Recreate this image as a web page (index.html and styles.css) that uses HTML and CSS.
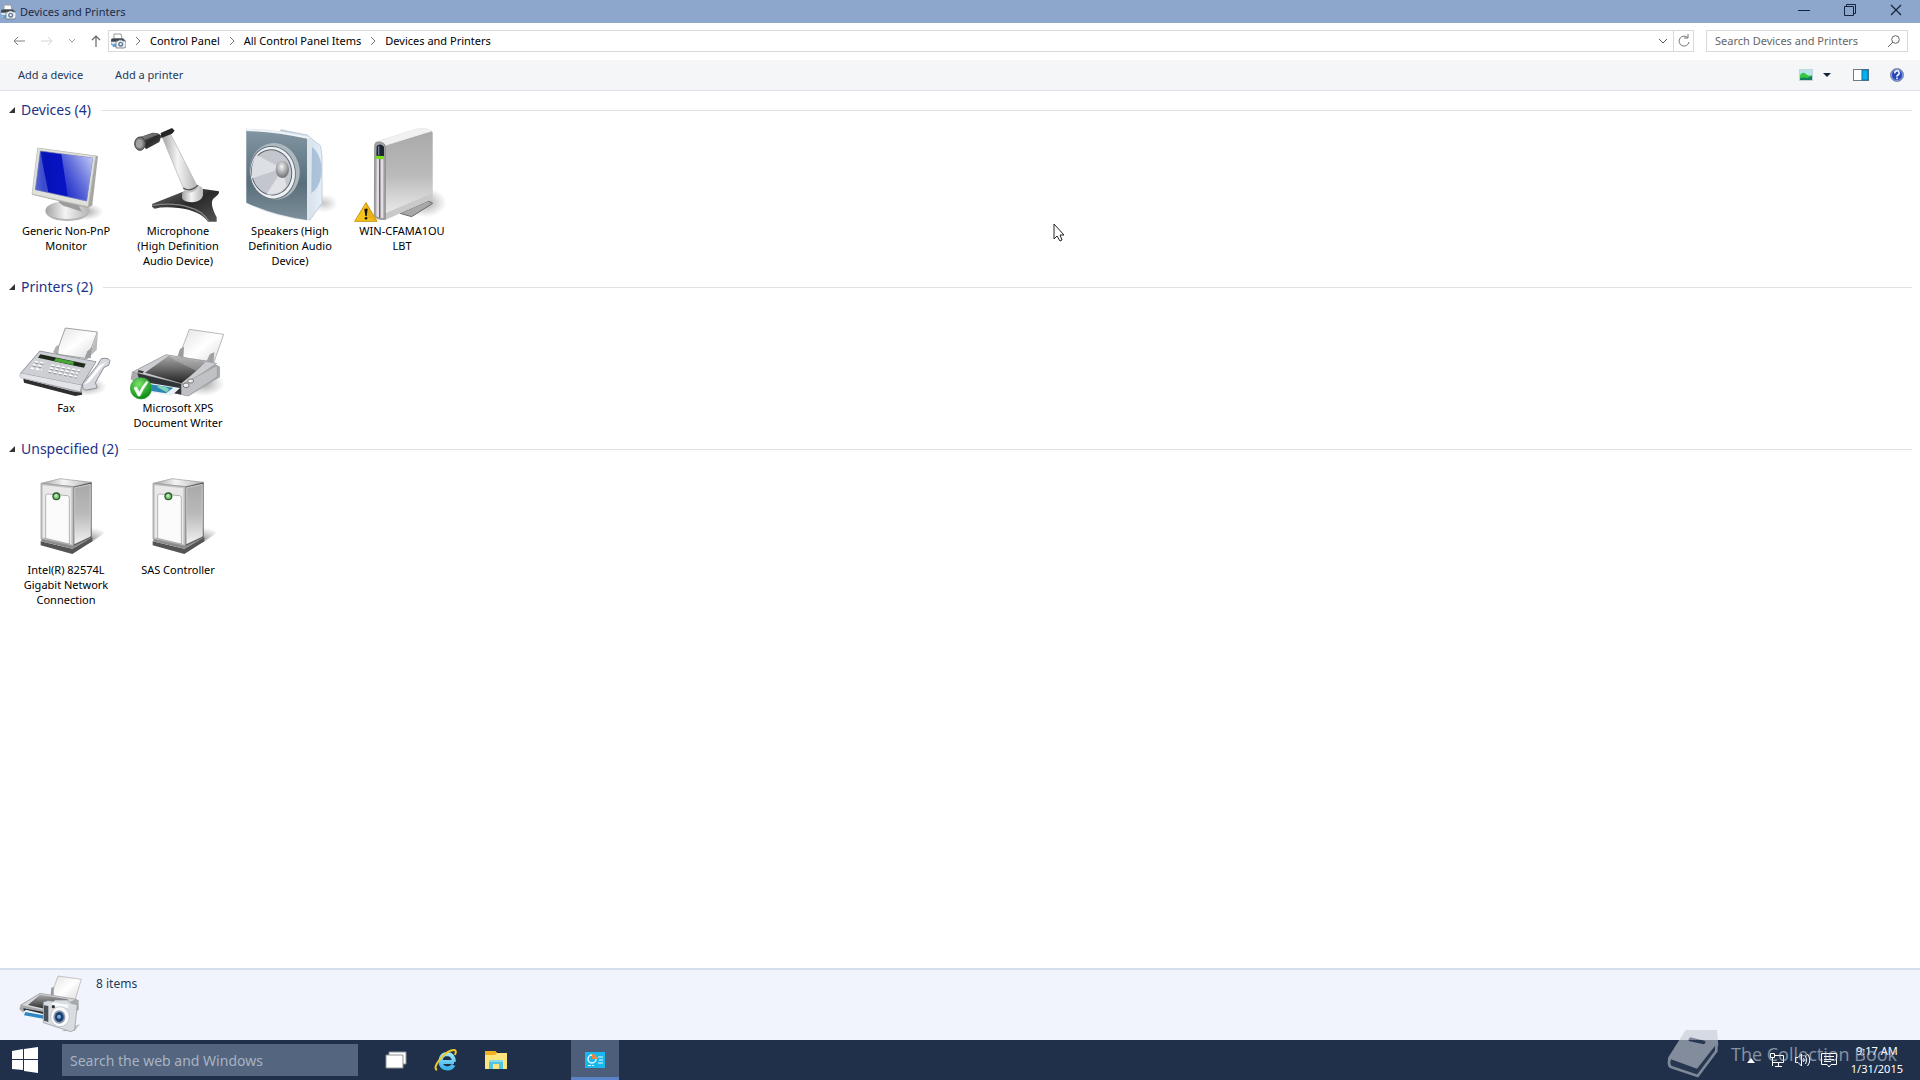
FILE: index.html
```
<!DOCTYPE html>
<html lang="en">
<head>
    <meta charset="utf-8">
    <title>Devices and Printers</title>
    <link rel="stylesheet" href="styles.css">
</head>

<body>
    <!-- shared gradients and symbols -->
    <svg class="defs" aria-hidden="true">
        <defs>
            <linearGradient id="screen" x1="0" y1="0" x2="1" y2="0"><stop offset="0" stop-color="#2a3fc0"/><stop offset=".15" stop-color="#0512b8"/><stop offset=".5" stop-color="#0714c4"/><stop offset="1" stop-color="#2c3cc4"/></linearGradient>
            <linearGradient id="gloss" x1="0" y1="1" x2="1" y2="0"><stop offset="0" stop-color="#4a5ad8" stop-opacity=".2"/><stop offset="1" stop-color="#d5dcfc" stop-opacity=".95"/></linearGradient>
            <linearGradient id="metal" x1="0" y1="0" x2="1" y2="1"><stop offset="0" stop-color="#f2f2f2"/><stop offset=".5" stop-color="#cfcfcf"/><stop offset="1" stop-color="#9a9a9a"/></linearGradient>
            <linearGradient id="metalh" x1="0" y1="0" x2="1" y2="0"><stop offset="0" stop-color="#a2a2a2"/><stop offset=".45" stop-color="#f4f4f4"/><stop offset="1" stop-color="#b4b4b4"/></linearGradient>
            <linearGradient id="paper" x1="0" y1="0" x2="1" y2="1"><stop offset="0" stop-color="#e2e2e2"/><stop offset=".5" stop-color="#fff"/><stop offset="1" stop-color="#d8d8d8"/></linearGradient>
            <linearGradient id="dark" x1="0" y1="0" x2="1" y2="1"><stop offset="0" stop-color="#6c6c6c"/><stop offset=".5" stop-color="#2a2a2a"/><stop offset="1" stop-color="#555"/></linearGradient>
            <linearGradient id="lid" x1="0" y1="0" x2="0" y2="1"><stop offset="0" stop-color="#a8a8a8"/><stop offset="1" stop-color="#222"/></linearGradient>
            <linearGradient id="slate" x1="0" y1="0" x2="0" y2="1"><stop offset="0" stop-color="#8196a2"/><stop offset=".6" stop-color="#5a6f7c"/><stop offset="1" stop-color="#7d909b"/></linearGradient>
            <linearGradient id="side" x1="0" y1="0" x2="0" y2="1"><stop offset="0" stop-color="#a9a9a9"/><stop offset=".5" stop-color="#bababa"/><stop offset="1" stop-color="#f0f0f0"/></linearGradient>
            <linearGradient id="glass" x1="0" y1="0" x2="1" y2="0"><stop offset="0" stop-color="#b4c5d6"/><stop offset="1" stop-color="#e6eff8"/></linearGradient>
            <radialGradient id="ball" cx=".45" cy=".35" r=".6"><stop offset="0" stop-color="#f4f4f4"/><stop offset="1" stop-color="#77797c"/></radialGradient>
            <radialGradient id="green" cx=".4" cy=".3" r=".7"><stop offset="0" stop-color="#7be36a"/><stop offset="1" stop-color="#0b8a15"/></radialGradient>
            <radialGradient id="shade"><stop offset="0" stop-color="#555" stop-opacity=".55"/><stop offset="1" stop-color="#777" stop-opacity="0"/></radialGradient>
            <linearGradient id="ie" x1="0" y1="0" x2="0" y2="1"><stop offset="0" stop-color="#9be4fb"/><stop offset="1" stop-color="#3db4ea"/></linearGradient>
        </defs>

        <symbol id="tower" viewBox="54 78 288 288">
            <path d="M268 262L330 268L272 308L215 330Z" fill="url(#shade)"/>
            <path d="M122 304L217 326L277 292V304L217 342L122 316Z" fill="#545454"/>
            <path d="M122 304L217 326L277 292L270 286L217 314L128 294Z" fill="#8c8c8c"/>
            <path d="M123 130L180 116L275 127L220 140Z" fill="url(#metalh)" stroke="#9a9a9a" stroke-width="2"/>
            <path d="M220 140L275 127V292L220 318Z" fill="#5a5a5a"/>
            <path d="M224 143L271 133V289L224 311Z" fill="url(#side)" stroke="#eee" stroke-width="2"/>
            <path d="M123 130L220 140V318L123 297Z" fill="#c4c4c4" stroke="#8e8e8e" stroke-width="2"/>
            <path d="M128 136L214 145V312L128 292Z" fill="#e9e9e9"/>
            <path d="M137 168Q137 161 144 162L203 167Q208 168 208 174V312L137 295Z" fill="#fbfbfb" stroke="#959595" stroke-width="2"/>
            <circle cx="169" cy="169" r="12" fill="#315c33"/>
            <circle cx="169" cy="169" r="8" fill="#7ecb70"/>
            <circle cx="168" cy="167" r="4" fill="#c1efb8"/>
        </symbol>

        <symbol id="mini" viewBox="0 0 16 16">
            <path d="M4 1H11L12 6H4Z" fill="#fdfdfd" stroke="#9a9a9a"/>
            <path d="M1 6L3 5H13L15 7V12H1Z" fill="#727981"/>
            <path d="M2 6H13L14 8H1Z" fill="#3f444a"/>
            <path d="M1 9H8V13H2Z" fill="#dce6ee"/>
            <path d="M2 11H7V14H3Z" fill="#5aa7d7"/>
            <path d="M6 8H8L9 7H12L13 8H16V14L14 15H6Z" fill="#eef1f4" stroke="#66717c" stroke-width=".8"/>
            <circle cx="10.7" cy="11.2" r="2.5" fill="#607a96"/>
            <circle cx="10.7" cy="11.2" r="1.1" fill="#fff"/>
        </symbol>

        <symbol id="chevron" viewBox="0 0 8 10">
            <path d="M2 1L6 5L2 9" fill="none" stroke="#777"/>
        </symbol>
    </svg>

    <div class="window">
        <header class="titlebar">
            <svg class="icon16"><use href="#mini"/></svg>
            <h1>Devices and Printers</h1>
            <div class="controls">
                <button type="button" aria-label="Minimize"><svg width="14" height="14"><path d="M1 7.500H13" stroke="#15233c"/></svg></button>
                <button type="button" aria-label="Restore"><svg width="14" height="14" fill="none" stroke="#15233c"><path d="M1.500 3.500H10.500V12.500H1.500ZM3.500 3.500V1.500H12.500V10.500H10.500"/></svg></button>
                <button type="button" aria-label="Close"><svg width="14" height="14"><path d="M2 2L12 12M12 2L2 12" stroke="#15233c" stroke-width="1.200"/></svg></button>
            </div>
        </header>

        <nav class="navbar">
            <div class="history">
                <button type="button" aria-label="Back"><svg width="14" height="14" fill="none" stroke="#808080"><path d="M13 7H2M6 3L2 7L6 11"/></svg></button>
                <button type="button" aria-label="Forward"><svg width="14" height="14" fill="none" stroke="#d4d4d4"><path d="M1 7H12M8 3L12 7L8 11"/></svg></button>
                <button type="button" class="small" aria-label="Recent locations"><svg width="8" height="8" fill="none" stroke="#999"><path d="M1 2L4 5L7 2"/></svg></button>
                <button type="button" aria-label="Up"><svg width="12" height="14" fill="none" stroke="#666" stroke-width="1.200"><path d="M6 13V2M2 6L6 2L10 6"/></svg></button>
            </div>
            <div class="address">
                <svg class="icon16"><use href="#mini"/></svg>
                <svg class="sep"><use href="#chevron"/></svg>
                <a href="#">Control Panel</a>
                <svg class="sep"><use href="#chevron"/></svg>
                <a href="#">All Control Panel Items</a>
                <svg class="sep"><use href="#chevron"/></svg>
                <a href="#">Devices and Printers</a>
                <button type="button" class="drop" aria-label="Previous locations"><svg width="10" height="8" fill="none" stroke="#555"><path d="M1 2L5 6L9 2"/></svg></button>
                <button type="button" class="refresh" aria-label="Refresh"><svg width="14" height="14" fill="none" stroke="#777"><path d="M11 4A5 5 0 1 0 12 8M11 0V4H7"/></svg></button>
            </div>
            <div class="search">
                <input type="text" placeholder="Search Devices and Printers" aria-label="Search Devices and Printers">
                <svg width="14" height="14" fill="none" stroke="#666"><circle cx="8.500" cy="5.500" r="3.800"/><path d="M6 8L1 13"/></svg>
            </div>
        </nav>

        <div class="toolbar">
            <button type="button">Add a device</button>
            <button type="button">Add a printer</button>
            <div class="tools">
                <button type="button" aria-label="Change your view">
                    <svg width="14" height="12"><rect width="14" height="12" fill="#c5d6da"/><rect x="1" y="1" width="12" height="10" fill="#b9e4ee"/><path d="M1 6Q4 2 7 5Q10 8 13 6V11H1Z" fill="#35c83f"/><path d="M1 9Q6 8 8 9L13 7V11H1Z" fill="#11805f"/></svg>
                </button>
                <button type="button" class="more" aria-label="More options"><svg width="8" height="4"><path d="M0 0H8L4 4Z" fill="#15233c"/></svg></button>
                <button type="button" class="pane" aria-label="Show the details pane"><svg width="16" height="12"><rect x=".5" y=".5" width="15" height="11" fill="#fff" stroke="#6f7a88"/><rect x="9" y="1" width="6" height="10" fill="#00b4f1" stroke="#166a9c"/></svg></button>
                <button type="button" aria-label="Help"><svg width="14" height="14"><circle cx="7" cy="7" r="6.500" fill="#2545bb" stroke="#8a93ad"/><circle cx="7" cy="7" r="5.500" fill="none" stroke="#bcc8ee" stroke-width=".7"/><path d="M4.800 5.300A2.200 2.200 0 1 1 7.500 7.200Q7 7.500 7 8.700" fill="none" stroke="#fff" stroke-width="1.500"/><rect x="6.200" y="9.600" width="1.600" height="1.600" fill="#fff"/></svg></button>
            </div>
        </div>

        <main>
            <section>
                <h2><svg width="8" height="8"><path d="M7 1V7H1Z" fill="#333"/></svg>Devices (4)</h2>
                <ul>
                    <li>
                        <svg viewBox="54 21 288 288">
                            <ellipse cx="255" cy="275" rx="55" ry="26" fill="url(#shade)"/>
                            <ellipse cx="202" cy="274" rx="66" ry="29" fill="#b7b7b7"/>
                            <ellipse cx="202" cy="270" rx="65" ry="27" fill="url(#metalh)"/>
                            <path d="M172 235L238 245Q234 262 248 276L205 262Q178 258 172 235Z" fill="#9c9c9c"/>
                            <path d="M113 84L294 108L277 256L264 264L96 224Z" fill="#a6a6a2"/>
                            <path d="M113 84L287 108L264 260L96 222Z" fill="#e1e1dc" stroke="#c0c0bb" stroke-width="2"/>
                            <path d="M121 93L278 114L260 243L106 209Z" fill="url(#screen)" stroke="#7379b0" stroke-width="2"/>
                            <path d="M184 102L278 114L260 243L204 231Z" fill="url(#gloss)"/>
                            <path d="M121 97L145 217L106 209Z" fill="#8fa0ee" opacity=".4"/>
                        </svg>
                        <a href="#">Generic Non-PnP<br>Monitor</a>
                    </li>
                    <li>
                        <svg viewBox="390 21 288 288">
                            <path d="M456 252L549 215L610 207L657 214Q660 222 640 236Q628 250 650 292V305H624Q600 272 536 264Q490 259 464 266L456 260Z" fill="url(#dark)"/>
                            <path d="M456 256Q520 246 568 262Q612 274 626 304" fill="none" stroke="#858585" stroke-width="4"/>
                            <path d="M546 218V234Q552 247 578 247Q606 244 609 226V207Q602 194 584 195Z" fill="url(#metalh)"/>
                            <path d="M486 50L512 43L590 195Q594 211 572 216Q552 218 550 204Z" fill="url(#metalh)" stroke="#b0b0b0" stroke-width="2"/>
                            <path d="M550 204Q570 218 594 196" fill="none" stroke="#555" stroke-width="4"/>
                            <path d="M482 39L516 24L524 32L516 41L484 54Z" fill="#252525"/>
                            <path d="M418 52L458 38Q478 38 484 48L478 66L438 88Z" fill="url(#dark)"/>
                            <path d="M424 50L462 39L478 43L434 60Z" fill="#909090" opacity=".6"/>
                            <ellipse cx="420" cy="71" rx="16" ry="20" fill="#777" stroke="#444" stroke-width="3"/>
                            <ellipse cx="418" cy="71" rx="10" ry="13" fill="#a2a2a2"/>
                        </svg>
                        <a href="#">Microphone<br>(High Definition<br>Audio Device)</a>
                    </li>
                    <li>
                        <svg viewBox="36 21 288 288">
                            <ellipse cx="282" cy="250" rx="42" ry="28" fill="url(#shade)" opacity=".6"/>
                            <path d="M152 29L232 45L272 78L276 108V250L240 300L225 296Z" fill="url(#glass)" stroke="#adbccc" stroke-width="2"/>
                            <path d="M246 80Q280 110 274 165Q268 205 244 220Z" fill="#95b0cc" opacity=".7"/>
                            <path d="M48 26Q135 26 243 51L240 294L232 302Q120 288 48 248Z" fill="#dce5ec"/>
                            <path d="M49 30Q130 32 231 54V300Q130 286 49 248Z" fill="url(#slate)"/>
                            <path d="M49 30Q130 32 236 54" fill="none" stroke="#edf3f7" stroke-width="6"/>
                            <ellipse cx="134" cy="154" rx="75" ry="85" fill="#aeb8bf" transform="rotate(-8 134 154)"/>
                            <ellipse cx="128" cy="158" rx="68" ry="79" fill="#eef1f3" stroke="#68757e" stroke-width="3" transform="rotate(-8 128 158)"/>
                            <ellipse cx="125" cy="157" rx="60" ry="68" fill="#c3c7cd" stroke="#596570" stroke-width="3" transform="rotate(-8 125 157)"/>
                            <path d="M156 145L80 105Q62 130 66 175Z" fill="#dcdfe3"/>
                            <path d="M156 150L110 222Q145 230 170 198Z" fill="#e0e2e6"/>
                            <ellipse cx="157" cy="148" rx="20" ry="26" fill="url(#ball)"/>
                        </svg>
                        <a href="#">Speakers (High<br>Definition Audio<br>Device)</a>
                    </li>
                    <li>
                        <svg viewBox="372 21 288 288">
                            <ellipse cx="585" cy="248" rx="65" ry="44" fill="url(#shade)"/>
                            <path d="M510 280L594 243L608 250L545 290Z" fill="#a8a8a8" stroke="#686868" stroke-width="3"/>
                            <path d="M434 66L560 26Q600 22 607 36V236L466 299L438 290Z" fill="#d2d2d2"/>
                            <path d="M466 78L604 32Q609 35 608 48V236L466 298Z" fill="url(#side)"/>
                            <path d="M436 66L562 26Q600 22 606 34L467 76Q458 62 436 66Z" fill="#f1f1f1"/>
                            <path d="M466 280L607 220V238L466 299Z" fill="#c9c9c9"/>
                            <path d="M434 78Q435 66 448 66Q465 67 466 82V298Q434 300 433 284Z" fill="#a5a3a6" stroke="#777" stroke-width="2"/>
                            <path d="M440 116L447 117V292L439 289ZM452 118L460 118V294L452 294Z" fill="#e1dde3"/>
                            <path d="M449 116V294" stroke="#5d5861" stroke-width="3"/>
                            <path d="M440 78Q450 68 462 80V110H439Z" fill="#1d242d"/>
                            <path d="M446 78V106" stroke="#6e8295" stroke-width="4"/>
                            <path d="M438 107L462 108V118L438 116Z" fill="#79dc1e"/>
                            <path d="M408 248L441 304H374Z" fill="#f6c51c" stroke="#ca9314" stroke-width="3"/>
                            <path d="M408 248L441 304L408 292Z" fill="#dc9d0e" opacity=".5"/>
                            <path d="M403 266H413L410 288H406Z" fill="#181200"/><circle cx="408" cy="295" r="4" fill="#181200"/>
                        </svg>
                        <a href="#">WIN-CFAMA1OU<br>LBT</a>
                    </li>
                </ul>
            </section>

            <section>
                <h2><svg width="8" height="8"><path d="M7 1V7H1Z" fill="#333"/></svg>Printers (2)</h2>
                <ul>
                    <li>
                        <svg viewBox="54 102 288 288">
                            <ellipse cx="260" cy="350" rx="60" ry="28" fill="url(#shade)"/>
                            <path d="M70 326L220 364L246 355V374L226 378L72 338Z" fill="#2e2e2e"/>
                            <path d="M196 174L292 186L262 266L168 252Z" fill="url(#paper)" stroke="#777" stroke-width="2"/>
                            <path d="M294 186L266 262L290 240Z" fill="#bcbcbc"/>
                            <path d="M160 247L168 230L176 226L174 252Z" fill="#aeb2b5" stroke="#858585"/>
                            <path d="M254 263L262 244L276 232L272 265Z" fill="#9c9fa2"/>
                            <path d="M119 243L288 275L246 346V368L222 365L62 324Q56 319 61 310Z" fill="#a2a5ab"/>
                            <path d="M119 243L288 275L245 346L62 310Z" fill="#cdcfd4" stroke="#80858b" stroke-width="2"/>
                            <path d="M62 310L244 346L240 364L60 322Z" fill="#e2e4e8"/>
                            <path d="M121 253L257 281L252 293L114 263Z" fill="#1f2b1b"/>
                            <path d="M168 264L222 275L219 285L162 273Z" fill="#49a73a"/>
                            <path d="M104 275L136 280M98 284L130 290M92 294L126 300M154 285L240 302M150 294L234 311M145 303L230 320" stroke="#fff" stroke-width="5" stroke-dasharray="10 6"/>
                            <path d="M104 279L136 284M98 288L130 294M154 289L240 306M150 298L234 315M145 307L230 324" stroke="#686f76" stroke-width="2" stroke-dasharray="10 6"/>
                            <path d="M292 286L304 266Q325 262 330 272L326 286L312 292L286 338L292 354L260 360Q245 360 248 340L260 326Z" fill="#d6d8dd" stroke="#888e96" stroke-width="3"/>
                            <path d="M296 288L318 276L268 336L252 345Z" fill="#fff"/>
                        </svg>
                        <a href="#">Fax</a>
                    </li>
                    <li>
                        <svg viewBox="390 102 288 288">
                            <ellipse cx="610" cy="342" rx="64" ry="36" fill="url(#shade)"/>
                            <path d="M568 178L671 193L638 288L538 258Z" fill="url(#paper)" stroke="#999" stroke-width="2"/>
                            <path d="M533 258L540 237L552 230L550 262Z" fill="#9b9b9b"/>
                            <path d="M618 277L630 252L643 247L640 288Z" fill="#a1a1a1"/>
                            <path d="M498 254L626 272L660 290V322L566 378L430 350L392 328L396 306Z" fill="#a7aaae"/>
                            <path d="M498 254L650 280L558 344L398 306Z" fill="#cbcdd0" stroke="#94979a" stroke-width="2"/>
                            <path d="M506 257L616 276Q590 304 544 340L435 308Z" fill="url(#lid)"/>
                            <path d="M506 257L616 276L588 302L524 271Z" fill="#ddd" opacity=".3"/>
                            <path d="M412 310L544 342V374L425 350Z" fill="#303436"/>
                            <path d="M445 338L540 354L514 378L450 366Z" fill="#e9f1f7"/>
                            <path d="M450 343L520 353L498 370L450 362Z" fill="#2d85b5"/>
                            <path d="M470 350Q490 344 508 358L500 367Z" fill="#83d4b6"/>
                            <path d="M544 344L652 286V320L564 378L545 374Z" fill="#bfc1c5" stroke="#999" stroke-width="2"/>
                            <ellipse cx="558" cy="346" rx="9" ry="7" fill="#eee" stroke="#777" stroke-width="3"/>
                            <ellipse cx="572" cy="333" rx="9" ry="6" fill="#eee" stroke="#777" stroke-width="3"/>
                            <path d="M416 300L432 304L428 310L412 307Z" fill="#443b3b"/>
                            <circle cx="423" cy="355" r="32" fill="url(#green)" stroke="#3fa83f" stroke-width="2"/>
                            <path d="M402 354L409 350L418 366Q428 346 440 334L444 337Q428 358 420 378H414Z" fill="#fff" stroke="#e6ffe2" stroke-width="2"/>
                        </svg>
                        <a href="#">Microsoft XPS<br>Document Writer</a>
                    </li>
                </ul>
            </section>

            <section>
                <h2><svg width="8" height="8"><path d="M7 1V7H1Z" fill="#333"/></svg>Unspecified (2)</h2>
                <ul>
                    <li>
                        <svg><use href="#tower"/></svg>
                        <a href="#">Intel(R) 82574L<br>Gigabit Network<br>Connection</a>
                    </li>
                    <li>
                        <svg><use href="#tower"/></svg>
                        <a href="#">SAS Controller</a>
                    </li>
                </ul>
            </section>
        </main>

        <footer class="details">
            <svg viewBox="54 42 192 180" width="64" height="60">
                <path d="M174 48L244 58L224 124L154 105Z" fill="url(#paper)" stroke="#aaa" stroke-width="2"/>
                <path d="M152 106L154 84L161 80V108Z" fill="#999"/>
                <path d="M120 100L236 120V150L160 180L72 160L58 148L62 134Z" fill="#a8abad"/>
                <path d="M120 100L230 118L150 156L62 136Z" fill="#d5d6d8" stroke="#999" stroke-width="2"/>
                <path d="M120 104L205 118L150 150L84 135Z" fill="url(#lid)"/>
                <path d="M70 145L130 156V178L74 162Z" fill="#25292c"/>
                <path d="M70 155L78 149L130 162V184L74 170Z" fill="#eef5fa"/>
                <path d="M76 156L130 166V176L72 166Z" fill="#2e86c0"/>
                <path d="M184 214L240 192L224 212Z" fill="#999" opacity=".6"/>
                <path d="M130 126L144 122L160 124L166 120H200L214 130L232 134L224 210L212 215L130 188Z" fill="#d9dde2" stroke="#8b929a" stroke-width="2"/>
                <path d="M132 136L145 138V186L132 182Z" fill="#4a5058"/>
                <path d="M158 127L206 134L204 143L154 140Z" fill="#f8f9fb"/>
                <circle cx="160" cy="140" r="5" fill="#30343a"/>
                <ellipse cx="180" cy="170" rx="28" ry="30" fill="#fbfbfc" stroke="#b0b6be" stroke-width="2"/>
                <ellipse cx="178" cy="171" rx="18" ry="20" fill="#8b9bb1"/>
                <ellipse cx="178" cy="171" rx="13" ry="15" fill="#1d3f6d"/>
                <circle cx="177" cy="170" r="6" fill="#6cb1e0"/>
            </svg>
            <p>8 items</p>
        </footer>
    </div>

    <div class="taskbar">
        <button type="button" class="start" aria-label="Start"><svg width="26" height="26" fill="#fff"><path d="M0 4L11 2V12H0ZM12 2L26 0V12H12ZM0 13H11V23L0 22ZM12 13H26V26L12 24Z"/></svg></button>
        <input type="text" placeholder="Search the web and Windows" aria-label="Search the web and Windows">
        <div class="apps">
            <button type="button" aria-label="Task View"><svg width="22" height="18"><path d="M4 1H21V13H4Z" fill="#fff" stroke="#8e9294"/><path d="M1 4H18V17H1Z" fill="#fff" stroke="#8e9294"/></svg></button>
            <button type="button" aria-label="Internet Explorer">
                <svg width="24" height="24" fill="none"><path d="M20 14H8M19.500 17Q17.500 20.500 13.500 20.500Q6.500 20 6.500 13Q7 6 13.500 6Q19.500 6.500 20 14" stroke="url(#ie)" stroke-width="4"/><path d="M3 22Q-1 20 6 11Q14 2 20 2Q23 2 21 7" stroke="#eecb2b" stroke-width="2"/></svg>
            </button>
            <button type="button" aria-label="File Explorer"><svg width="22" height="20"><path d="M0 1H10L12 3H22V19H0Z" fill="#fbe37d"/><path d="M0 1H10L12 3L10 5H0Z" fill="#f2af1e"/><path d="M4 19V10H18V19H14V14H8V19Z" fill="#51c5df"/><path d="M4 10H18V12H4Z" fill="#8adcea"/></svg></button>
            <button type="button" class="active" aria-label="Control Panel"><svg width="20" height="16"><rect width="20" height="16" fill="#18b8ee"/><circle cx="7" cy="7" r="4" fill="none" stroke="#e3f8ff" stroke-width="1.500"/><path d="M7 7V2A5 5 0 0 1 12 7Z" fill="#ed853c"/><path d="M13 5H18M14 8H18M13 11H18M3 13.500H6M7 13.500H9" stroke="#e6faff"/></svg></button>
        </div>
        <div class="tray">
            <button type="button" class="hidden-icons" aria-label="Show hidden icons"><svg width="8" height="5"><path d="M0 5L4 0L8 5Z" fill="#fff"/></svg></button>
            <button type="button" aria-label="Network"><svg width="16" height="16" fill="none" stroke="#fff"><path d="M5 3.500H14.500V10.500H4M9.500 11V14M6 14.500H13M3.500 5V14M1.500 1.500H5.500V5.500H1.500Z"/></svg></button>
            <button type="button" aria-label="Volume"><svg width="16" height="16" fill="none" stroke="#fff"><path d="M.5 5.500H3L6.500 2V14L3 10.500H.5ZM8.500 6Q10 8 8.500 10M10.500 4Q13 8 10.500 12M12.500 2Q17 8 12.500 14"/></svg></button>
            <button type="button" aria-label="Notifications"><svg width="16" height="16" fill="none" stroke="#fff"><path d="M.5 1.500H15.500V12.500H10L8 15L6 12.500H.5ZM3 4.500H13M3 7.500H13M3 9.500H10"/></svg></button>
            <time datetime="2015-01-31T09:17">9:17 AM<br>1/31/2015</time>
        </div>
    </div>

    <!-- floats over the desktop -->
    <div class="watermark">
        <svg width="52" height="48" viewBox="0 0 156 144">
            <path d="M56 0H150L154 45L103 125Q100 131 90 129L8 101Q0 95 4 82Z" fill="#c5cad2"/>
            <path d="M70 22L112 32Q118 34 115 39L110 43L68 34Q62 32 66 26Z" fill="#2d3c55"/>
            <path d="M12 88L90 116L146 45V65L94 138L11 112Q4 105 12 88Z" fill="#2d3c55"/>
            <path d="M8 86Q2 108 14 112L92 138L148 63V44" fill="none" stroke="#bcc3cc" stroke-width="8"/>
        </svg>
        <span>The Collection Book</span>
    </div>
    <svg class="cursor" width="13" height="20"><path d="M1 1V16L4 13L7 18L9 17L7 12H11Z" fill="#fff" stroke="#222"/></svg>
</body>
</html>
```
FILE: styles.css
```
* {
    box-sizing: border-box;
}

body {
    display: flex;
    flex-direction: column;
    height: 100vh;
    margin: 0;
    overflow: hidden;
    background-color: #fff;
    color: #000;
    font: 12px/16px "Noto Sans", "Open Sans", sans-serif;
}

h1,
h2,
p,
ul {
    margin: 0;
    padding: 0;
    font-weight: normal;
}

button,
input {
    margin: 0;
    padding: 0;
    border: 0;
    background: none;
    color: inherit;
    font: inherit;
}

button {
    display: flex;
    align-items: center;
    justify-content: center;
}

a {
    color: inherit;
    text-decoration: none;
}

svg {
    display: block;
    flex: none;
}

.defs {
    position: absolute;
    width: 0;
    height: 0;
}

.icon16 {
    width: 16px;
    height: 16px;
}

.window {
    display: flex;
    flex: 1;
    flex-direction: column;
    min-height: 0;
}

/* title bar */
.titlebar {
    display: flex;
    align-items: center;
    height: 23px;
    background-color: #8da6cc;
    color: #1d2b45;
}

.titlebar h1 {
    flex: 1;
    margin-left: 4px;
    font-size: 11px;
}

.controls {
    display: flex;
    padding-right: 1px;
}

.controls button {
    width: 46px;
    height: 20px;
    margin-bottom: 4px;
}

/* address bar */
.navbar {
    display: flex;
    align-items: center;
    height: 37px;
    padding: 0 12px 2px;
    font-size: 11px;
}

.history {
    display: flex;
    align-items: center;
    gap: 14px;
    width: 96px;
}

.address {
    display: flex;
    flex: 1;
    align-items: center;
    height: 22px;
    padding-left: 1px;
    border: 1px solid #d9d9d9;
}

.sep {
    width: 8px;
    height: 10px;
    margin: 0 8px;
}

.drop {
    width: 20px;
    height: 20px;
    margin-left: auto;
}

.refresh {
    width: 20px;
    height: 20px;
    border-left: 1px solid #d9d9d9;
}

.search {
    display: flex;
    align-items: center;
    width: 202px;
    height: 22px;
    margin-left: 12px;
    padding: 0 6px 0 8px;
    border: 1px solid #d9d9d9;
}

.search input {
    flex: 1;
    min-width: 0;
}

.search input::placeholder {
    color: #666;
    opacity: 1;
}

/* command bar */
.toolbar {
    display: flex;
    align-items: center;
    gap: 32px;
    height: 31px;
    padding: 0 16px 0 18px;
    border-bottom: 1px solid #dfe3e8;
    background-color: #f5f6f7;
    color: #1e395b;
    font-size: 11px;
}

.tools {
    display: flex;
    align-items: center;
    margin-left: auto;
}

.more {
    margin: 0 22px 0 10px;
}

.pane {
    margin-right: 21px;
}

/* device list */
main {
    flex: 1;
    min-height: 0;
    padding: 5px 8px 0;
    overflow: hidden;
}

section {
    padding-bottom: 5px;
}

h2 {
    display: flex;
    align-items: center;
    height: 28px;
    color: #1e3287;
    font-size: 14px;
}

h2 svg {
    margin-right: 5px;
}

h2::after {
    content: "";
    flex: 1;
    height: 1px;
    margin-left: 10px;
    background-color: #e2e2e2;
}

main ul {
    display: flex;
    gap: 16px;
    padding: 3px 10px 0;
    list-style-type: none;
}

main li {
    width: 96px;
    text-align: center;
    font-size: 11px;
    line-height: 15px;
}

main li svg {
    width: 96px;
    height: 96px;
}

main li a {
    display: block;
    white-space: nowrap;
}

/* details pane */
.details {
    display: flex;
    gap: 14px;
    height: 72px;
    padding: 4px 18px;
    border-top: 2px solid #d3dfec;
    background-color: #f1f4fc;
    color: #1e395b;
}

.details p {
    margin-top: 2px;
}

/* taskbar */
.taskbar {
    display: flex;
    align-items: center;
    height: 40px;
    background-color: #20304b;
    color: #fff;
}

.start {
    width: 62px;
    height: 40px;
    padding-right: 12px;
}

.taskbar input {
    width: 296px;
    height: 32px;
    padding: 0 8px;
    background-color: #53657f;
    font-size: 14px;
}

.taskbar input::placeholder {
    color: #a9b3c2;
    opacity: 1;
}

.apps {
    display: flex;
    gap: 2px;
    margin-left: 14px;
}

.apps button {
    width: 48px;
    height: 40px;
}

.apps .active {
    margin-left: 49px;
    border-top: 3px solid #4d5e7a;
    border-bottom: 3px solid #5b83c8;
    background-color: #4d5e7a;
}

.tray {
    display: flex;
    align-items: center;
    gap: 10px;
    margin-left: auto;
    padding-right: 17px;
}

.hidden-icons {
    margin-right: 4px;
}

.tray time {
    margin-left: 4px;
    font-size: 11px;
    line-height: 18px;
    text-align: center;
}

.watermark {
    position: absolute;
    right: 23px;
    bottom: 2px;
    display: flex;
    align-items: center;
    gap: 12px;
    color: #c9d0da;
    font: 18px/24px "Open Sans", "Noto Sans", sans-serif;
    opacity: .6;
    pointer-events: none;
}

.cursor {
    position: absolute;
    top: 223px;
    left: 1053px;
}
```
